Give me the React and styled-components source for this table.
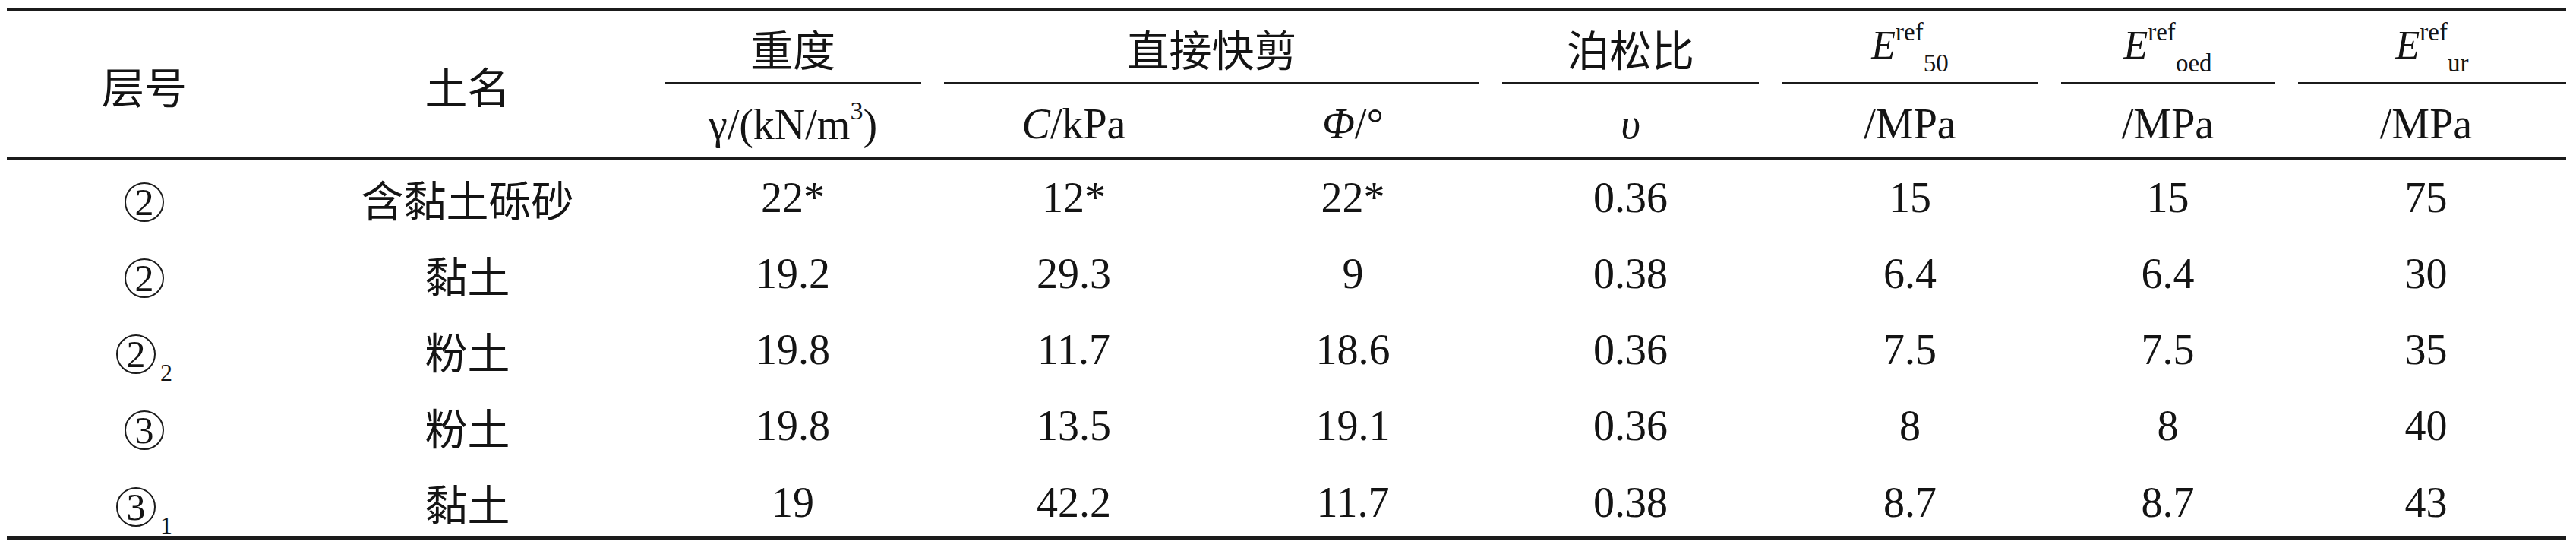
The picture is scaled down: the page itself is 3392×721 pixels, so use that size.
import styled, { createGlobalStyle } from 'styled-components';

const ink = '#1b1b1b';

const GlobalStyle = createGlobalStyle`
  html, body {
    margin: 0;
    background: #fff;
  }
  body {
    font-family: "Liberation Serif", "Noto Sans CJK SC", serif;
    color: #141414;
  }
`;

const Page = styled.div`
  padding: 10px 0 0 9px;
`;

const Table = styled.table`
  width: 3370px;
  table-layout: fixed;
  border-collapse: separate;
  border-spacing: 0;
  border-top: 5px solid ${ink};
  border-bottom: 5px solid ${ink};
  font-size: 56px;
  text-align: center;
`;

const Col = styled.col`
  width: ${props => props.$w}px;
`;

const TallCell = styled.th`
  padding: 0;
  font-weight: normal;
  vertical-align: middle;
  border-bottom: 3px solid ${ink};
`;

const GroupCell = styled.th`
  padding: ${({ $last }) => $last ? '0 0 0 16px' : '0 15px'};
  font-weight: normal;
`;

const GroupLabel = styled.div`
  height: 95px;
  display: flex;
  align-items: center;
  justify-content: center;
  padding-top: 2px;
  box-sizing: border-box;
  border-bottom: 2px solid ${ink};
  white-space: nowrap;
`;

const UnitCell = styled.th`
  padding: 0;
  font-weight: normal;
  border-bottom: 3px solid ${ink};
`;

const UnitLabel = styled.div`
  height: 97px;
  padding-top: 8px;
  box-sizing: border-box;
  display: flex;
  align-items: center;
  justify-content: center;
  white-space: nowrap;
`;

const BodyRow = styled.tr`
  height: 100px;
  &:last-child {
    height: 95px;
  }
  &:last-child > td {
    padding-top: 6px;
  }
`;

const Cell = styled.td`
  padding: 0;
  vertical-align: middle;
  white-space: nowrap;
`;

const Var = styled.i`
  font-style: italic;
  font-size: ${({ $size }) => $size ? `${$size}px` : 'inherit'};
`;

const Sup = styled.sup`
  font-size: ${({ $size }) => $size || 33}px;
  line-height: 1;
  vertical-align: ${({ $raise }) => $raise || 24}px;
`;

const Sub = styled.sub`
  font-size: 33px;
  line-height: 1;
  vertical-align: -17px;
`;

const Sym = styled.span`
  line-height: 1;
`;

const Mark = styled.span`
  display: inline-flex;
  align-items: center;
  vertical-align: middle;
`;

const Circle = styled.span`
  width: 52px;
  height: 52px;
  box-sizing: border-box;
  border: 2px solid ${ink};
  border-radius: 50%;
  display: inline-flex;
  align-items: center;
  justify-content: center;
  font-size: 50px;
  line-height: 1;
`;

const Index = styled.span`
  align-self: flex-end;
  margin-left: 6px;
  font-size: 32px;
  line-height: 1;
  transform: translateY(14px);
`;

const widths = [362, 489, 368, 372, 363, 368, 368, 311, 369];

const rows = [
  { layer: '2', name: '含黏土砾砂', vals: ['22*', '12*', '22*', '0.36', '15', '15', '75'] },
  { layer: '2', name: '黏土', vals: ['19.2', '29.3', '9', '0.38', '6.4', '6.4', '30'] },
  { layer: '2', idx: '2', name: '粉土', vals: ['19.8', '11.7', '18.6', '0.36', '7.5', '7.5', '35'] },
  { layer: '3', name: '粉土', vals: ['19.8', '13.5', '19.1', '0.36', '8', '8', '40'] },
  { layer: '3', idx: '1', name: '黏土', vals: ['19', '42.2', '11.7', '0.38', '8.7', '8.7', '43'] },
];

const Modulus = ({ sub }) => (
  <Sym>
    <Var $size={52}>E</Var>
    <Sup>ref</Sup>
    <Sub>{sub}</Sub>
  </Sym>
);

const Layer = ({ layer, idx }) => (
  <Mark>
    <Circle>{layer}</Circle>
    {idx && <Index>{idx}</Index>}
  </Mark>
);

const App = () => {
  return (
    <>
      <GlobalStyle />
      <Page>
        <Table>
          <colgroup>
            {widths.map((w, i) => <Col key={i} $w={w} />)}
          </colgroup>
          <thead>
            <tr>
              <TallCell rowSpan={2}>层号</TallCell>
              <TallCell rowSpan={2}>土名</TallCell>
              <GroupCell><GroupLabel>重度</GroupLabel></GroupCell>
              <GroupCell colSpan={2}><GroupLabel>直接快剪</GroupLabel></GroupCell>
              <GroupCell><GroupLabel>泊松比</GroupLabel></GroupCell>
              <GroupCell><GroupLabel><Modulus sub="50" /></GroupLabel></GroupCell>
              <GroupCell><GroupLabel><Modulus sub="oed" /></GroupLabel></GroupCell>
              <GroupCell $last><GroupLabel><Modulus sub="ur" /></GroupLabel></GroupCell>
            </tr>
            <tr>
              <UnitCell><UnitLabel><span>γ/(kN/m<Sup $size={34} $raise={26}>3</Sup>)</span></UnitLabel></UnitCell>
              <UnitCell><UnitLabel><span><Var>C</Var>/kPa</span></UnitLabel></UnitCell>
              <UnitCell><UnitLabel><span><Var>Φ</Var>/°</span></UnitLabel></UnitCell>
              <UnitCell><UnitLabel><span><Var>υ</Var></span></UnitLabel></UnitCell>
              <UnitCell><UnitLabel>/MPa</UnitLabel></UnitCell>
              <UnitCell><UnitLabel>/MPa</UnitLabel></UnitCell>
              <UnitCell><UnitLabel>/MPa</UnitLabel></UnitCell>
            </tr>
          </thead>
          <tbody>
            {rows.map((row, i) => (
              <BodyRow key={i}>
                <Cell><Layer layer={row.layer} idx={row.idx} /></Cell>
                <Cell>{row.name}</Cell>
                {row.vals.map((v, j) => <Cell key={j}>{v}</Cell>)}
              </BodyRow>
            ))}
          </tbody>
        </Table>
      </Page>
    </>
  );
};

export default App;
